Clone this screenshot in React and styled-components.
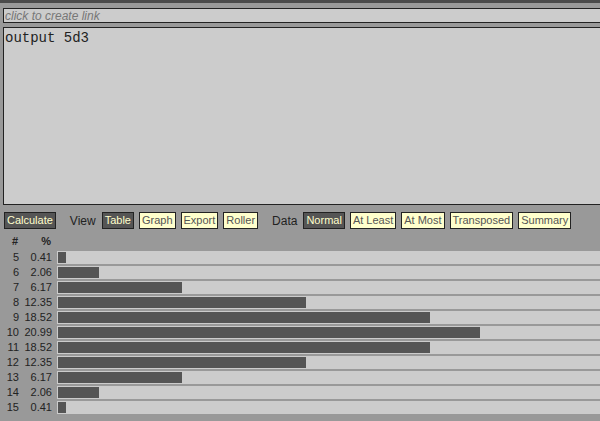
import React from "react";
import styled, { createGlobalStyle } from "styled-components";

const rows = [
  [5, 0.41], [6, 2.06], [7, 6.17], [8, 12.35], [9, 18.52], [10, 20.99],
  [11, 18.52], [12, 12.35], [13, 6.17], [14, 2.06], [15, 0.41],
];

export default function App() {
  return (
    <>
      <GlobalStyle />
      <TopStrip />
      <Main>
        <LinkInput readOnly placeholder="click to create link" />
        <Program readOnly defaultValue="output 5d3" />
        <Toolbar>
          <Button $active>Calculate</Button>
          <Group>
            <Label>View</Label>
            <Button $active>Table</Button>
            <Button>Graph</Button>
            <Button>Export</Button>
            <Button>Roller</Button>
          </Group>
          <Group>
            <Label>Data</Label>
            <Button $active>Normal</Button>
            <Button>At Least</Button>
            <Button>At Most</Button>
            <Button>Transposed</Button>
            <Button>Summary</Button>
          </Group>
        </Toolbar>
      </Main>
      <Table>
        <HeadCell>#</HeadCell>
        <HeadCell>%</HeadCell>
        <span />
        {rows.map(([n, p]) => (
          <React.Fragment key={n}>
            <NumCell>{n}</NumCell>
            <NumCell>{p.toFixed(2)}</NumCell>
            <BarCell>
              <Bar style={{ width: `${p * 20.1}px` }} />
            </BarCell>
          </React.Fragment>
        ))}
      </Table>
    </>
  );
}

const GlobalStyle = createGlobalStyle`
  body {
    margin: 0;
    background: #999;
    overflow: hidden;
    font-family: "Liberation Sans", Arial, sans-serif;
  }
`;

const TopStrip = styled.div`
  height: 3px;
  background: #4a4a4a;
`;

const Main = styled.div`
  display: flex;
  flex-direction: column;
  padding-left: 3px;
`;

const LinkInput = styled.input`
  box-sizing: border-box;
  width: 620px;
  height: 15px;
  margin: 5px 0 0;
  padding: 0 1px;
  border: 1px solid #222;
  background: #ccc;
  font: italic 12px "Liberation Sans", Arial, sans-serif;
  outline: none;
  &::placeholder {
    color: #777;
  }
`;

const Program = styled.textarea`
  box-sizing: border-box;
  width: 620px;
  height: 178px;
  margin: 4px 0 0;
  padding: 2px 1px;
  border: 1px solid #222;
  background: #ccc;
  color: #222;
  font: 14px "Liberation Mono", "Courier New", monospace;
  resize: none;
  outline: none;
`;

const Toolbar = styled.div`
  display: flex;
  align-items: center;
  gap: 14px;
  padding: 7px 0 5px 1px;
`;

const Group = styled.div`
  display: flex;
  align-items: center;
  gap: 5px;
`;

const Label = styled.span`
  font-size: 12px;
  color: #222;
  margin-right: 1px;
`;

const Button = styled.button`
  box-sizing: border-box;
  height: 17px;
  margin: 0;
  padding: 0 2px;
  border: 1px solid #222;
  background: ${(p) => (p.$active ? "#555" : "#ffc")};
  color: ${(p) => (p.$active ? "#ffc" : "#555")};
  font: 11px "Liberation Sans", Arial, sans-serif;
  line-height: 15px;
`;

const Table = styled.div`
  display: grid;
  grid-template-columns: 19px 33px 1fr;
  grid-auto-rows: 15px;
  color: #222;
  font-size: 11px;
`;

const HeadCell = styled.div`
  font-weight: bold;
  text-align: right;
  padding-right: 1px;
  line-height: 14px;
  height: 14px;
`;

const NumCell = styled.div`
  text-align: right;
  line-height: 15px;
  padding-top: 1px;
`;

const BarCell = styled.div`
  margin: 2px 0 0 5px;
  height: 13px;
  background: #ccc;
  display: flex;
  align-items: flex-start;
`;

const Bar = styled.div`
  margin: 1px 0 0 1px;
  height: 11px;
  background: #555;
`;
